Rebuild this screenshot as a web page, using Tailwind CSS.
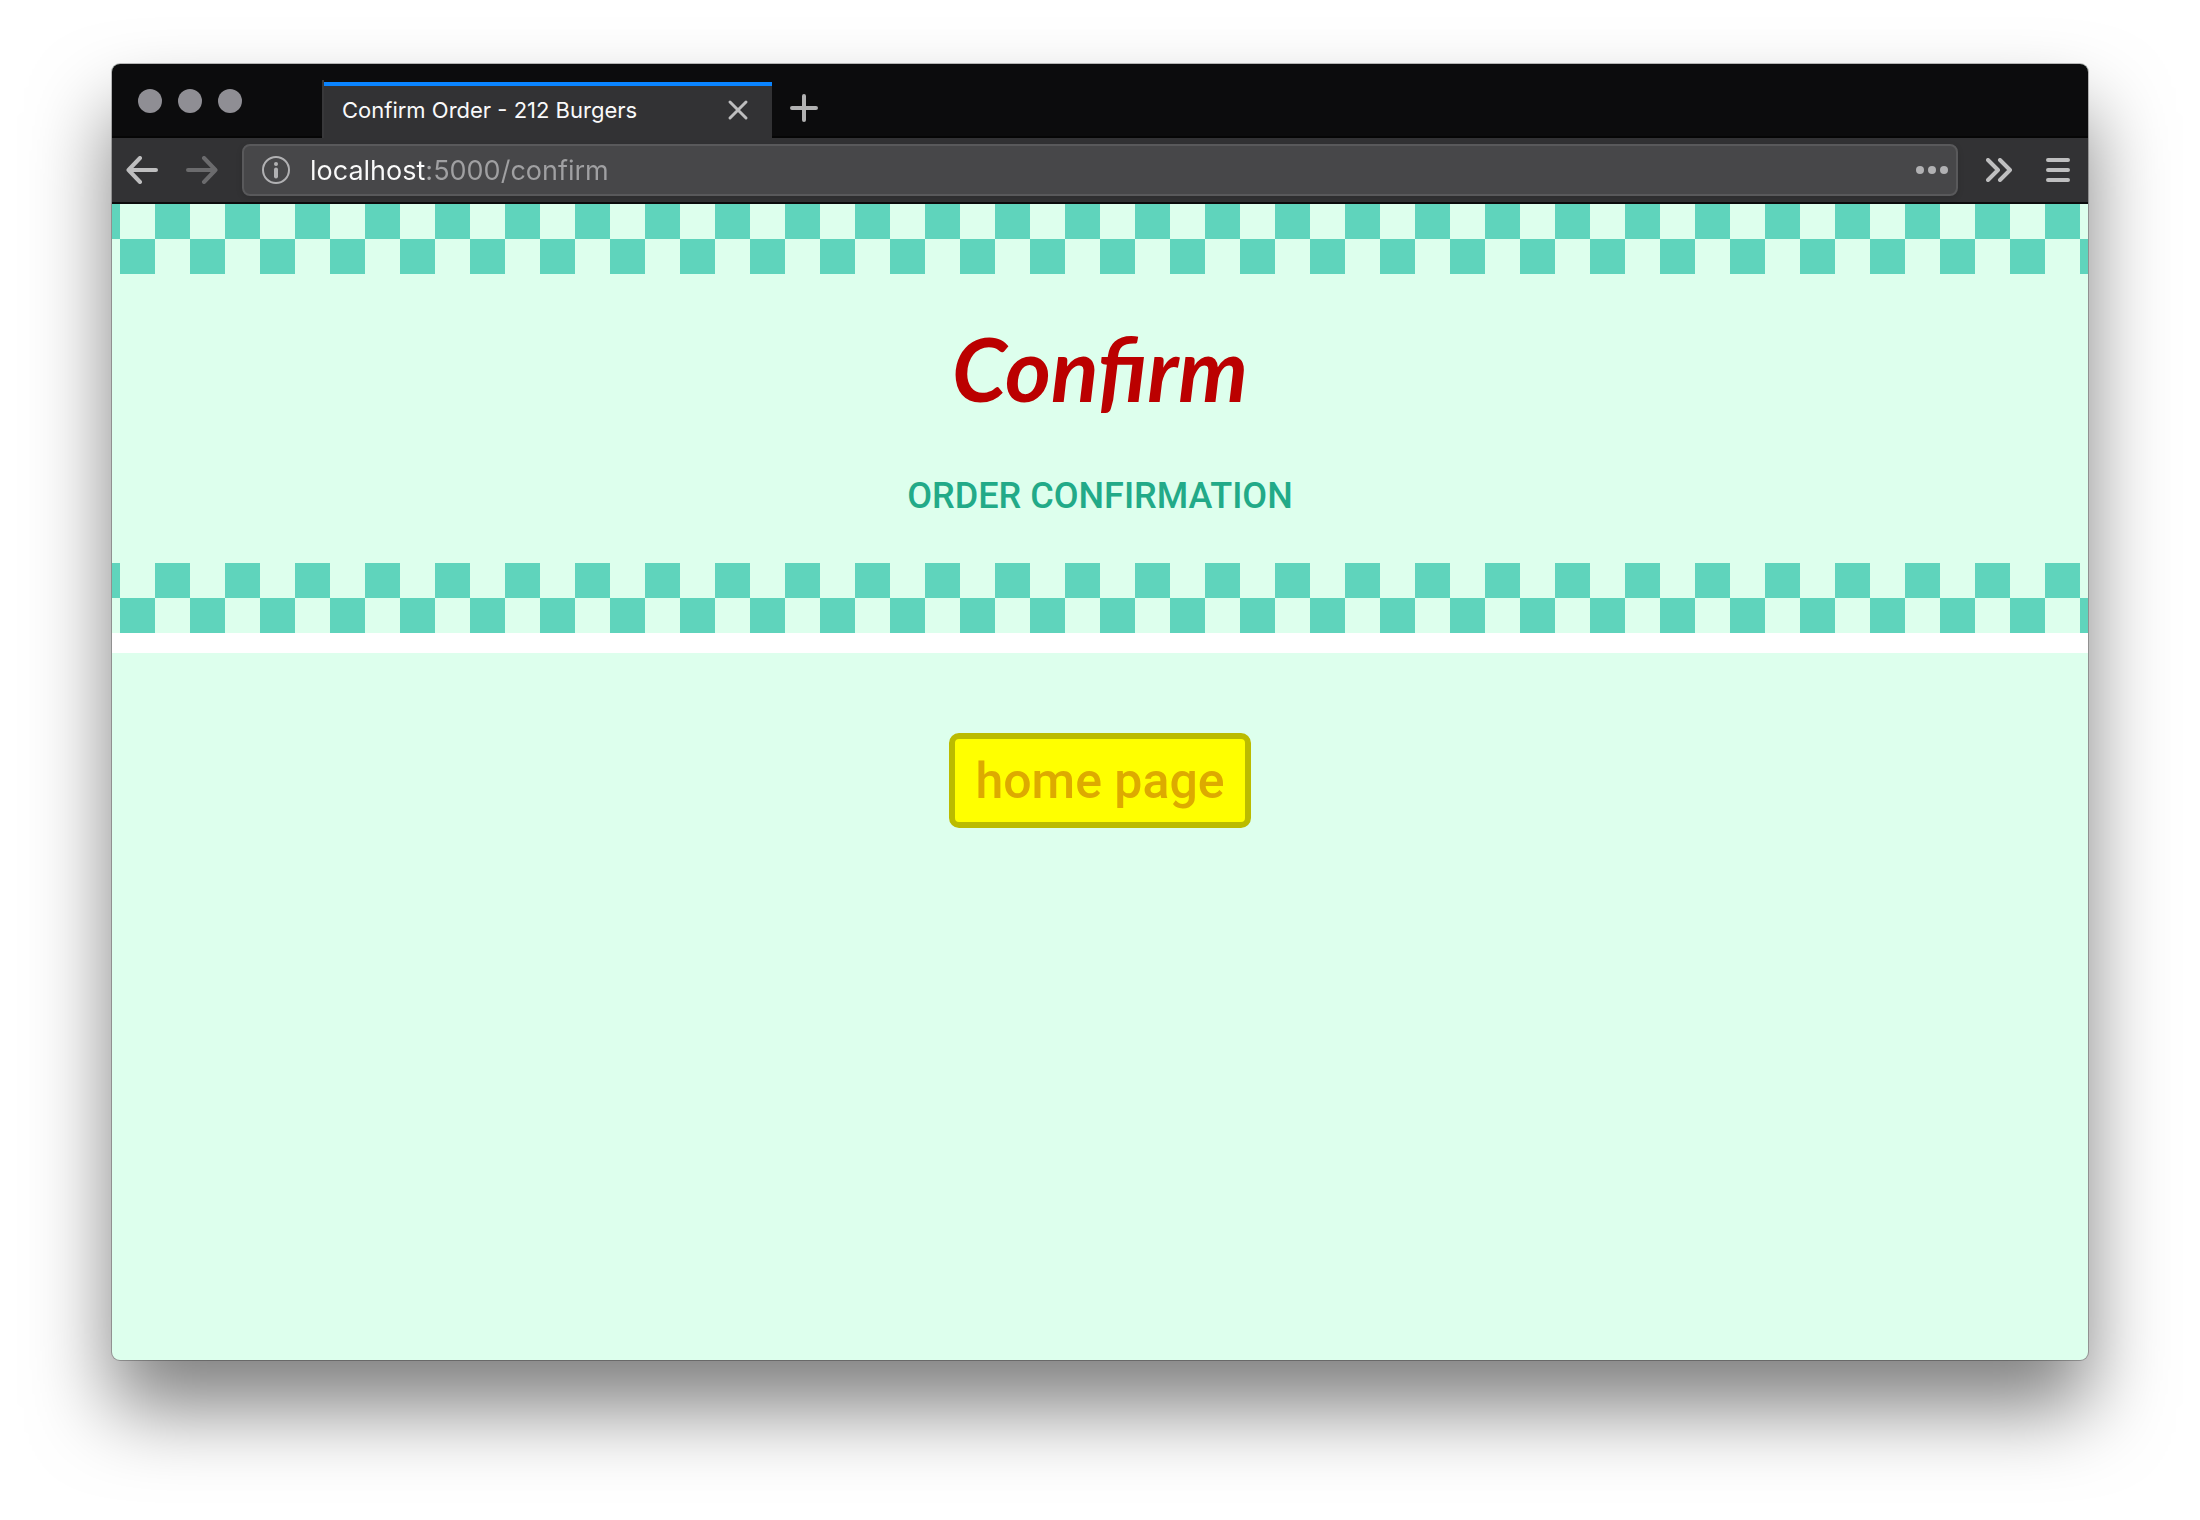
<!DOCTYPE html>
<html lang="en">
<head>
<meta charset="utf-8">
<meta name="viewport" content="width=device-width, initial-scale=1">
<title>Confirm Order - 212 Burgers</title>
<script src="https://cdn.jsdelivr.net/npm/@tailwindcss/browser@4"></script>
</head>
<body class="flex min-h-screen flex-col bg-white px-28 pt-16 pb-40 font-['Inter',sans-serif]">
<div class="flex flex-1 flex-col overflow-hidden rounded-lg bg-[#ddffed] shadow-[0_0_0_1px_rgba(0,0,0,0.25),0_48px_80px_rgba(0,0,0,0.5)]">

  <!-- Tab strip -->
  <div class="flex h-[74px] items-stretch border-b-2 border-[#060606] bg-[#0c0c0d]">
    <div class="flex w-[210px] shrink-0 items-center gap-4 pt-0.5 pl-[26px]">
      <button aria-label="Close window" class="size-6 rounded-full bg-[#8f8e94]"></button>
      <button aria-label="Minimize window" class="size-6 rounded-full bg-[#8f8e94]"></button>
      <button aria-label="Zoom window" class="size-6 rounded-full bg-[#8f8e94]"></button>
    </div>
    <div class="-mb-0.5 mt-4 flex w-[450px] border-l-2 border-[#38383a]">
      <div class="mt-0.5 flex flex-1 items-center justify-between border-t-4 border-[#0a84ff] bg-[#323234] pr-5 pb-1 pl-[18px]">
        <span class="text-[22px] leading-7 text-[#f9f9fa]">Confirm Order - 212 Burgers</span>
        <button aria-label="Close tab" class="text-[#bebebf]">
          <svg class="size-7" viewBox="0 0 28 28" fill="none" stroke="currentColor" stroke-width="3" stroke-linecap="round"><path d="M6 6l16 16M22 6L6 22"/></svg>
        </button>
      </div>
    </div>
    <button aria-label="New tab" class="mt-4 ml-[18px] self-start pt-3.5 text-[#b1b1b1]">
      <svg class="size-7" viewBox="0 0 28 28" fill="none" stroke="currentColor" stroke-width="4" stroke-linecap="round"><path d="M14 2v24M2 14h24"/></svg>
    </button>
  </div>

  <!-- Toolbar -->
  <div class="flex h-[66px] items-center border-b-2 border-[#0c0c0d] bg-[#323234] pr-[18px] pl-3.5 text-[#bebebf]">
    <button aria-label="Back">
      <svg class="h-7 w-8" viewBox="0 0 32 28" fill="none" stroke="currentColor" stroke-width="4" stroke-linecap="round" stroke-linejoin="round"><path d="M30 14H2.500M14 2L2.500 14L14 26"/></svg>
    </button>
    <button aria-label="Forward" class="ml-7 text-[#6b6b6d]" disabled>
      <svg class="h-7 w-8" viewBox="0 0 32 28" fill="none" stroke="currentColor" stroke-width="4" stroke-linecap="round" stroke-linejoin="round"><path d="M2 14h27.500M18 2l11.500 12L18 26"/></svg>
    </button>
    <div class="ml-6 flex h-[52px] flex-1 items-center rounded-lg border-2 border-[#59595b] bg-[#474749] pr-2 pl-[18px] shadow-[0_2px_6px_rgba(0,0,0,0.12)]">
      <button aria-label="Site information" class="text-[#b1b1b3]">
        <svg class="size-7" viewBox="0 0 28 28" fill="none" stroke="currentColor"><circle cx="14" cy="14" r="13" stroke-width="2"/><path d="M14 13.500v7" stroke-width="4" stroke-linecap="round"/><circle cx="14" cy="8" r="2" fill="currentColor" stroke="none"/></svg>
      </button>
      <input aria-label="Address" type="text" value="localhost:5000/confirm" class="ml-5 h-10 min-w-0 flex-1 bg-[linear-gradient(90deg,#fafafa_116px,#a0a0a2_116px)] bg-clip-text pt-0.5 text-[27px] text-transparent outline-none">
      <button aria-label="Page actions" class="text-[#b1b1b3]">
        <svg class="h-2 w-8" viewBox="0 0 32 8" fill="currentColor"><circle cx="4" cy="4" r="4"/><circle cx="16" cy="4" r="4"/><circle cx="28" cy="4" r="4"/></svg>
      </button>
    </div>
    <button aria-label="More tools" class="ml-7">
      <svg class="h-6 w-7" viewBox="0 0 28 24" fill="none" stroke="currentColor" stroke-width="4" stroke-linecap="round" stroke-linejoin="round"><path d="M2 2l10 10L2 22M14 2l10 10L14 22"/></svg>
    </button>
    <button aria-label="Open menu" class="ml-8">
      <svg class="h-6 w-6" viewBox="0 0 24 24" fill="none" stroke="currentColor" stroke-width="4" stroke-linecap="round"><path d="M2 2h20M2 12h20M2 22h20"/></svg>
    </button>
  </div>

  <!-- Page -->
  <header class="border-b-20 border-white text-center">
    <div class="h-[70px] bg-[conic-gradient(#ddffed_25%,#5fd4bc_0_50%,#ddffed_0_75%,#5fd4bc_0)] bg-size-[70px_70px] bg-center"></div>
    <div class="flex h-[289px] flex-col items-center pt-11">
      <h1 class="font-['Lato',cursive] text-[88px] leading-[100px] font-bold text-[#bb0000] italic">Confirm</h1>
      <p class="mt-[58px] font-['Roboto',sans-serif] text-[36px] leading-10 font-medium text-[#22aa88] uppercase">Order confirmation</p>
    </div>
    <div class="h-[70px] bg-[conic-gradient(#ddffed_25%,#5fd4bc_0_50%,#ddffed_0_75%,#5fd4bc_0)] bg-size-[70px_70px] bg-center"></div>
  </header>
  <main class="flex justify-center pt-20">
    <button class="h-[95px] rounded-[10px] border-6 border-[#bbbb00] bg-[#ffff00] px-5 font-['Roboto',sans-serif] text-[50px] leading-[60px] font-medium text-[#ddaa00]">home page</button>
  </main>
</div>
</body>
</html>
